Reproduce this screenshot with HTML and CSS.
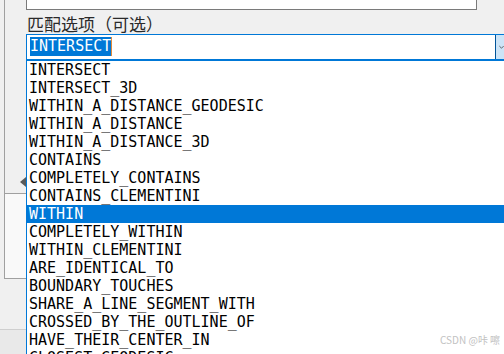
FILE: index.html
```html
<!DOCTYPE html>
<html lang="zh-CN">
<head>
    <meta charset="UTF-8">
    <title>匹配选项</title>
    <link rel="stylesheet" href="styles.css">
</head>
<body>

<div class="page">
    <div class="side">
        <div class="side-top"><span class="side-arrow"></span></div>
        <div class="side-box"></div>
        <div class="side-gap"></div>
        <div class="side-foot"></div>
    </div>

    <div class="main">
        <div class="topbox"></div>
        <div class="label">匹配选项（可选）</div>

        <div class="combo">
            <span class="combo-value">INTERSECT</span>
            <span class="combo-spacer"></span>
            <span class="combo-btn">
                <svg width="7" height="5" viewBox="0 0 7 5"><path d="M0.5 0.5 L3.5 3.5 L6.5 0.5" fill="none" stroke="#333" stroke-width="1"/></svg>
            </span>
        </div>

        <ul class="list" id="matchList"></ul>
    </div>
</div>

<div class="watermark">CSDN @咔 嚓</div>

<script>
const options = [
    "INTERSECT",
    "INTERSECT_3D",
    "WITHIN_A_DISTANCE_GEODESIC",
    "WITHIN_A_DISTANCE",
    "WITHIN_A_DISTANCE_3D",
    "CONTAINS",
    "COMPLETELY_CONTAINS",
    "CONTAINS_CLEMENTINI",
    "WITHIN",
    "COMPLETELY_WITHIN",
    "WITHIN_CLEMENTINI",
    "ARE_IDENTICAL_TO",
    "BOUNDARY_TOUCHES",
    "SHARE_A_LINE_SEGMENT_WITH",
    "CROSSED_BY_THE_OUTLINE_OF",
    "HAVE_THEIR_CENTER_IN",
    "CLOSEST_GEODESIC"
];
const selected = "WITHIN";

document.getElementById("matchList").innerHTML = options.map(name => `
    <li class="${name === selected ? 'selected' : ''}">${name}</li>
`).join('');
</script>

</body>
</html>
```

FILE: styles.css
```css
body {
    margin: 0;
    width: 504px;
    height: 354px;
    overflow: hidden;
    background-color: #f0f0f0;
    font-family: "Noto Sans CJK SC", "Liberation Sans", sans-serif;
    color: #000;
}
.page {
    display: flex;
    height: 354px;
}

/* left chrome of the dialog */
.side {
    width: 26px;
    flex-shrink: 0;
    display: flex;
    flex-direction: column;
}
.side-top {
    height: 193px;
    margin-left: 4px;
    border-left: 1px solid #a0a0a0;
    display: flex;
    justify-content: flex-end;
    align-items: flex-start;
    padding-top: 177px;
    box-sizing: border-box;
}
.side-arrow {
    width: 0;
    height: 0;
    border-top: 5px solid transparent;
    border-bottom: 5px solid transparent;
    border-right: 6px solid #5a5a5a;
}
.side-box {
    height: 86px;
    margin-left: 4px;
    border: 1px solid #a0a0a0;
    border-right: none;
    background: #f9f9f9;
    box-sizing: border-box;
}
.side-gap {
    flex: 1;
}
.side-foot {
    height: 24px;
    border-top: 1px solid #cfcfcf;
    background: #e9e9e9;
}

/* form column */
.main {
    flex: 1;
    display: flex;
    flex-direction: column;
    min-width: 0;
}
.topbox {
    width: 451px;
    height: 10px;
    flex-shrink: 0;
    box-sizing: border-box;
    border: 1px solid #7a7a7a;
    border-top: none;
    background: #fff;
}
.label {
    height: 24px;
    flex-shrink: 0;
    box-sizing: border-box;
    padding: 3px 0 0 1px;
    font-size: 17px;
    line-height: 21px;
    color: #2a2a2a;
}
.combo {
    height: 27px;
    flex-shrink: 0;
    box-sizing: border-box;
    display: flex;
    background: #fff;
    border: 1px solid #0078d7;
    border-bottom-width: 2px;
    border-right: none;
}
.combo-value {
    align-self: flex-start;
    margin: 2px 0 0 3px;
    height: 19px;
    line-height: 19px;
    font-family: "DejaVu Sans Mono", monospace;
    font-size: 15px;
    background: #0078d7;
    color: #fff;
    border-right: 1px solid #e08a3c;
}
.combo-spacer {
    flex: 1;
}
.combo-btn {
    width: 9px;
    box-sizing: border-box;
    border-left: 1px solid #005499;
    background: #cce4f7;
    display: flex;
    align-items: center;
    padding-left: 3px;
}
.list {
    flex: 1;
    margin: 0;
    padding: 0;
    list-style: none;
    overflow: hidden;
    background: #fff;
    border-left: 1px solid #0078d7;
    font-family: "DejaVu Sans Mono", monospace;
    font-size: 15px;
}
.list li {
    height: 18px;
    line-height: 18px;
    padding-left: 2px;
    white-space: nowrap;
}
.list li.selected {
    background-color: #0078d7;
    color: #fff;
}
.watermark {
    position: absolute;
    left: 440px;
    top: 334px;
    white-space: nowrap;
    font-family: "Noto Sans CJK SC", "Liberation Sans", sans-serif;
    font-size: 10px;
    line-height: 12px;
    color: #c2c2c2;
}
```
